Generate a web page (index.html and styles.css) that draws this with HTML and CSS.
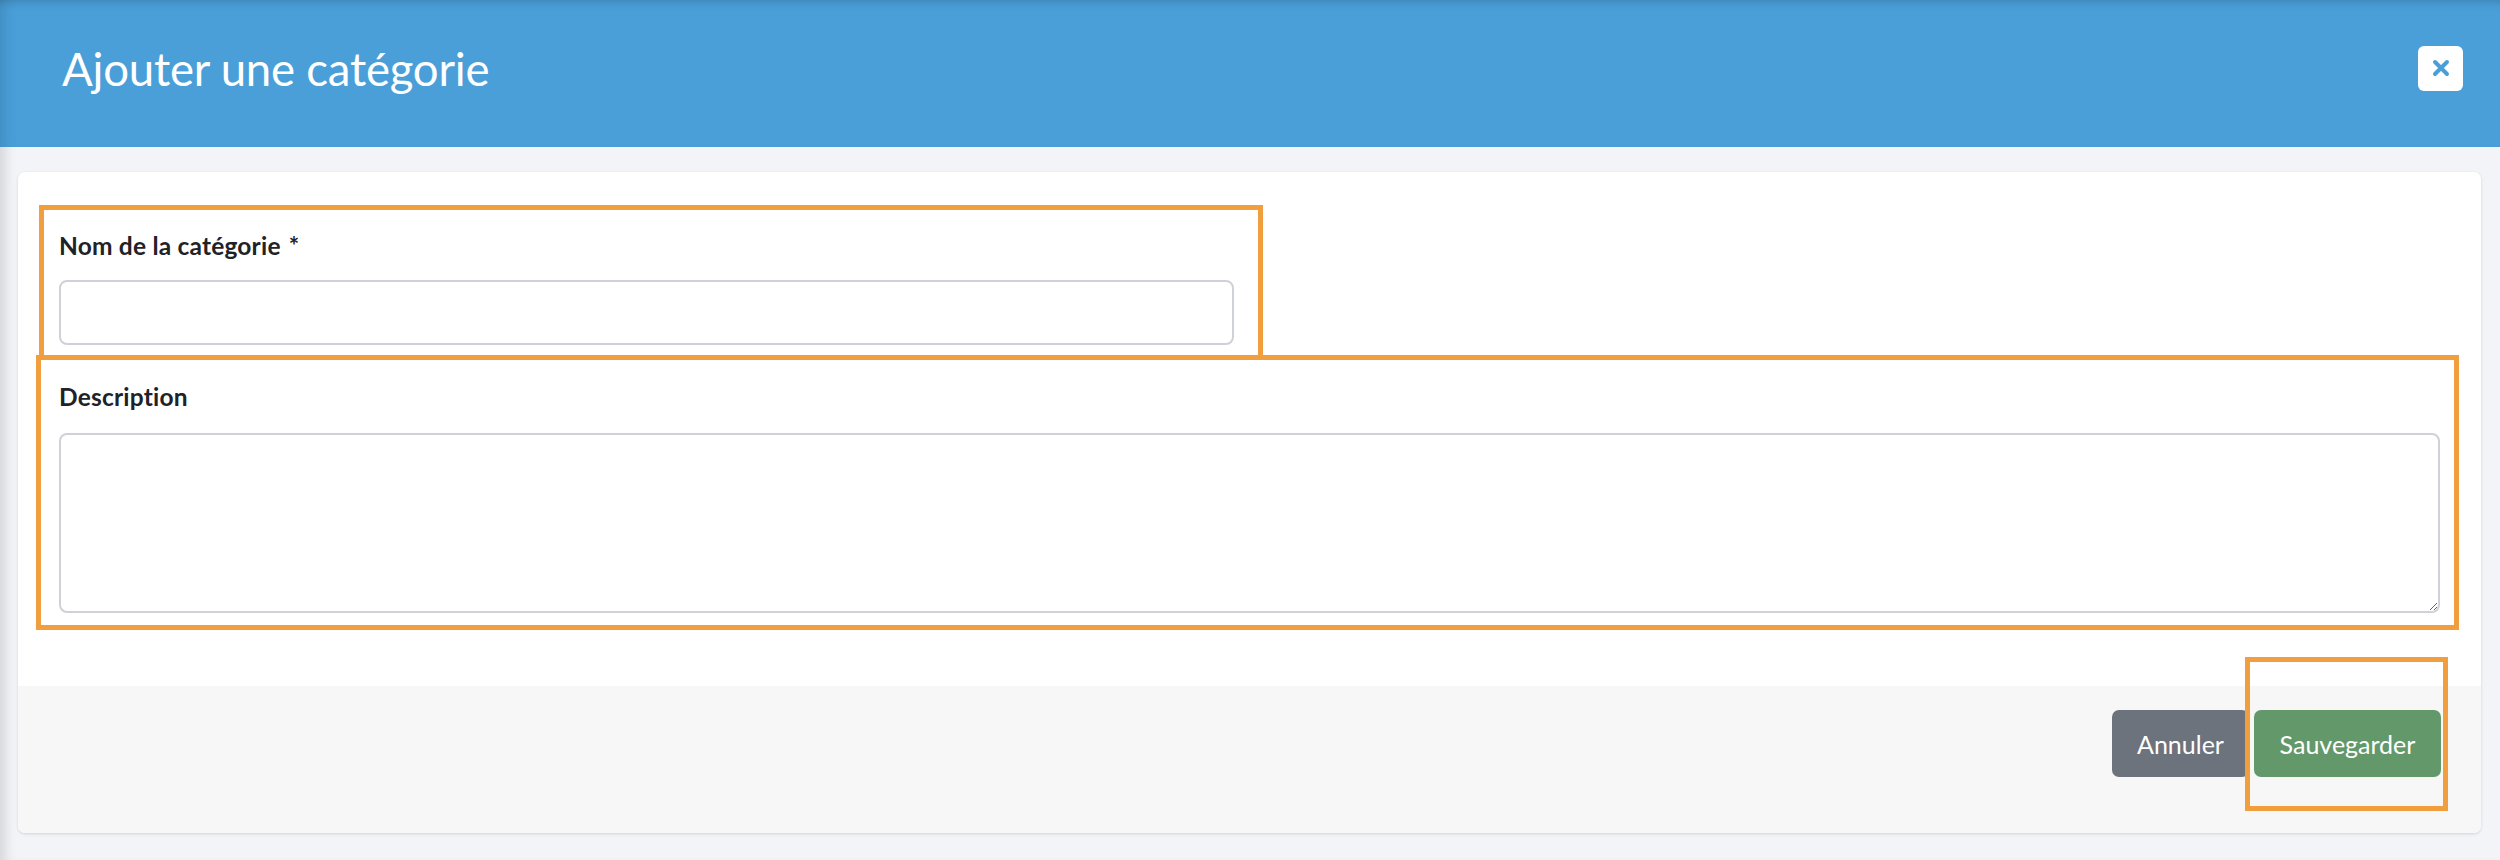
FILE: index.html
```html
<!DOCTYPE html>
<html lang="fr">
<head>
<meta charset="utf-8">
<title>Ajouter une catégorie</title>
<link rel="stylesheet" href="styles.css">
</head>
<body>
<div class="page">
  <header class="modal-header">
    <h1 class="modal-title">Ajouter une catégorie</h1>
    <button class="btn-close" type="button" aria-label="Fermer">
      <svg width="18" height="18" viewBox="0 0 18 18" aria-hidden="true">
        <path d="M3 3 L15 15 M15 3 L3 15" stroke="#4a9fd9" stroke-width="4" stroke-linecap="round" fill="none"/>
      </svg>
    </button>
  </header>
  <main class="content">
    <form class="card">
      <div class="card-body">
        <div class="row">
          <div class="field field-name">
            <label class="field-label" for="name">Nom de la catégorie <span class="req">*</span></label>
            <input class="field-input" id="name" type="text">
          </div>
        </div>
        <div class="field field-desc">
          <label class="field-label" for="desc">Description</label>
          <textarea class="field-textarea" id="desc"></textarea>
        </div>
      </div>
      <div class="card-footer">
        <button class="btn btn-secondary" type="button">Annuler</button>
        <button class="btn btn-success" type="submit">Sauvegarder</button>
      </div>
      <div class="mark mark-name"></div>
      <div class="mark mark-desc"></div>
      <div class="mark mark-save"></div>
    </form>
  </main>
</div>
</body>
</html>
```

FILE: styles.css
```css
* { box-sizing: border-box; }

html, body {
  margin: 0;
  padding: 0;
}

body {
  width: 2500px;
  height: 860px;
  background: #f3f4f8;
  font-family: "Lato", "Open Sans", sans-serif;
  color: #212529;
  overflow: hidden;
}

.page {
  position: relative;
  height: 860px;
  box-shadow: inset 14px 0 14px -10px rgba(0, 0, 0, 0.14);
}

.modal-header {
  height: 147px;
  background: #4a9fd9;
  display: flex;
  align-items: center;
  justify-content: space-between;
  padding: 0 37px 10px 62px;
  box-shadow: inset 0 10px 10px -8px rgba(0, 0, 0, 0.18), inset 14px 0 14px -10px rgba(0, 0, 0, 0.12);
}

.modal-title {
  margin: 0;
  font-size: 45.5px;
  line-height: 46px;
  font-weight: 400;
  letter-spacing: -0.2px;
  color: #ffffff;
}

.btn-close {
  width: 45px;
  height: 45px;
  border: 0;
  padding: 0;
  border-radius: 6px;
  background: #ffffff;
  display: flex;
  align-items: center;
  justify-content: center;
  margin-top: -1px;
}

.content {
  padding: 25px 19px 0 18px;
}

.card {
  position: relative;
  background: #ffffff;
  border-radius: 7px;
  box-shadow: 0 1px 3px rgba(0, 0, 0, 0.14);
  overflow: visible;
}

.card-body {
  padding: 56px 41px 73px 41px;
}

.row {
  display: grid;
  grid-template-columns: 1175px 1fr;
}

.field-label {
  display: block;
  font-size: 24.5px;
  line-height: 36px;
  font-weight: 700;
  letter-spacing: 0.2px;
  color: #1f2226;
  margin-bottom: 16px;
}

.req {
  margin-left: 2px;
}

.field-desc {
  margin-top: 34px;
}

.field-desc .field-label {
  margin-bottom: 18px;
}

.field-input,
.field-textarea {
  display: block;
  width: 100%;
  border: 2px solid #ced2d8;
  border-radius: 8px;
  background: #ffffff;
  font: inherit;
  font-size: 24px;
  padding: 10px 16px;
  margin: 0;
}

.field-input {
  height: 65px;
}

.field-textarea {
  height: 180px;
  resize: vertical;
}

.card-footer {
  height: 147px;
  background: #f7f7f7;
  border-radius: 0 0 7px 7px;
  display: flex;
  justify-content: flex-end;
  align-items: flex-start;
  gap: 5px;
  padding: 24px 40px 0 0;
}

.btn {
  height: 67px;
  border: 0;
  border-radius: 7px;
  font-family: inherit;
  font-size: 25px;
  color: #ffffff;
  padding: 0 25px;
}

.btn-secondary {
  background: #6c737c;
  width: 137px;
}

.btn-success {
  background: #63996a;
  width: 187px;
}

.mark {
  position: absolute;
  border: 5px solid #f09e3e;
  pointer-events: none;
}

.mark-name {
  left: 21px;
  top: 33px;
  width: 1224px;
  height: 155px;
}

.mark-desc {
  left: 18px;
  top: 183px;
  width: 2423px;
  height: 275px;
}

.mark-save {
  left: 2227px;
  top: 485px;
  width: 203px;
  height: 154px;
}
```
